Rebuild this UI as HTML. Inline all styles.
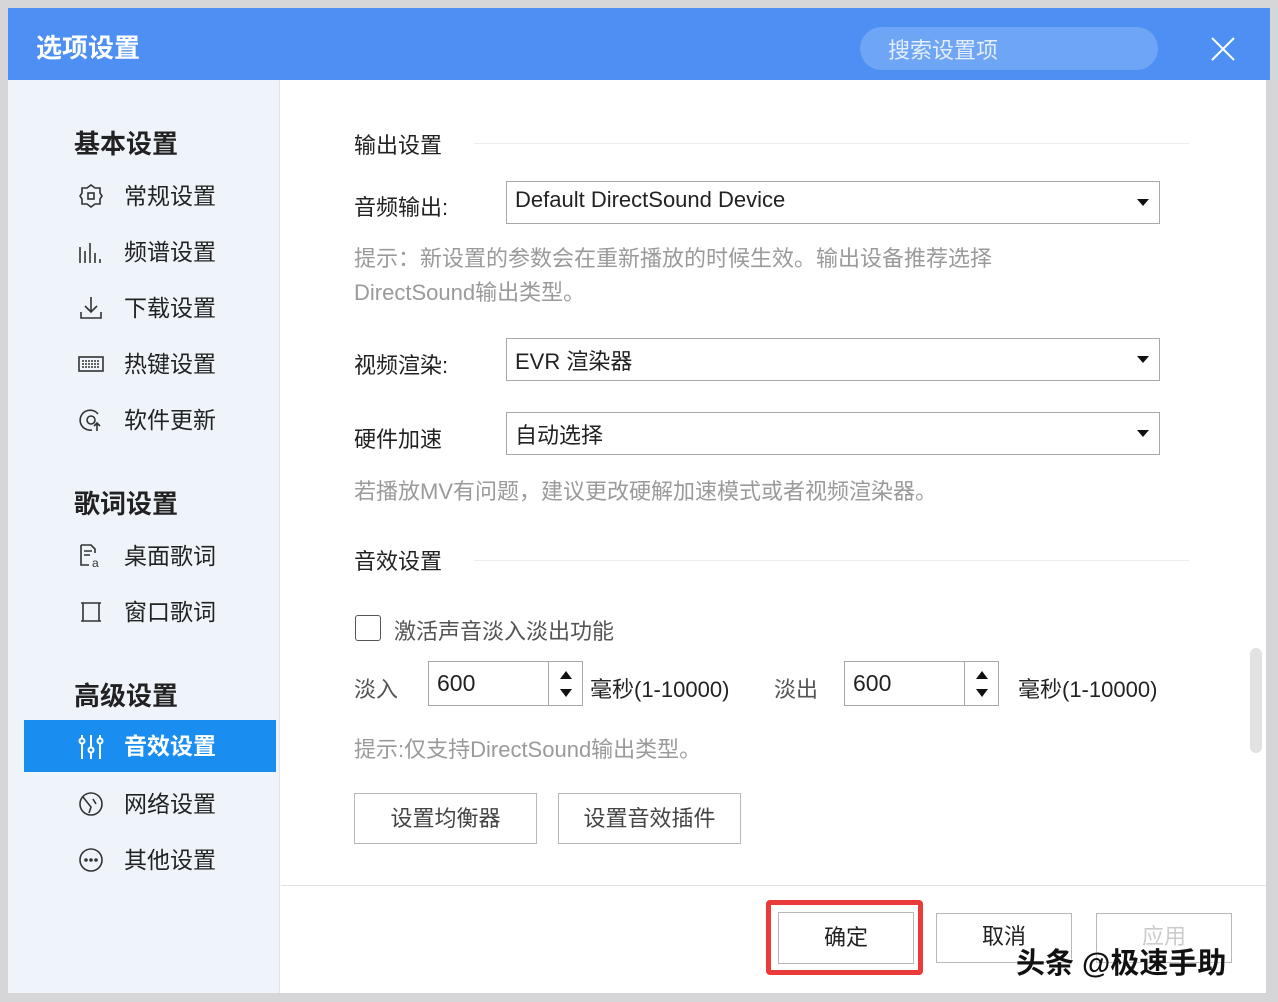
<!DOCTYPE html>
<html><head><meta charset="utf-8"><style>
*{margin:0;padding:0;box-sizing:border-box}
body{width:1278px;height:1002px;background:#d6d6d8;position:relative;overflow:hidden;font-family:"Liberation Sans","Noto Sans CJK SC",sans-serif;color:#222}
.win{position:absolute;left:8px;top:8px;width:1258px;height:985px;background:#fff}
.hdr{position:absolute;left:0;top:0;width:1262px;height:72px;background:#4d8ff2}
.title{position:absolute;left:28px;top:20px;font-size:26px;color:#fff;font-weight:bold}
.search{position:absolute;left:852px;top:19px;width:298px;height:43px;border-radius:22px;background:#6fa5f5;color:#e4eefc;font-size:22px;padding:6px 28px}
.side{position:absolute;left:0;top:72px;width:272px;height:913px;background:#eff4fb;border-right:1px solid #dde3ec}
.sh{position:absolute;left:66px;font-size:26px;font-weight:bold;color:#222}
.it{position:absolute;left:16px;width:252px;height:52px;font-size:23px;padding-left:100px;line-height:52px}
.it svg{position:absolute;left:54px;top:13px}
.sel{background:#1a8ef0;color:#fff;font-weight:bold}
.c{position:absolute;font-size:22px}
.gray{color:#9a9a9a}
.line{position:absolute;height:1px;background:#ececec}
.dd{position:absolute;left:498px;width:654px;height:43px;border:1px solid #a8a8a8;font-size:22px;padding:5px 8px}
.dd:after{content:"";position:absolute;right:10px;top:17px;border-left:6px solid transparent;border-right:6px solid transparent;border-top:7px solid #111}
.spin{position:absolute;width:155px;height:45px;border:1px solid #a8a8a8;font-size:23px;padding:8px 8px}
.spin i{position:absolute;right:0;top:0;width:34px;height:43px;border-left:1px solid #a8a8a8}
.spin i:before{content:"";position:absolute;left:11px;top:9px;border-left:6px solid transparent;border-right:6px solid transparent;border-bottom:8px solid #111}
.spin i:after{content:"";position:absolute;left:11px;top:27px;border-left:6px solid transparent;border-right:6px solid transparent;border-top:8px solid #111}
.btn{position:absolute;border:1px solid #b8b8b8;font-size:22px;text-align:center;background:#fff}
</style></head><body>
<div class="win">
<div class="hdr"><div class="title">选项设置</div><div class="search">搜索设置项</div>
<svg style="position:absolute;left:1203px;top:29px" width="24" height="24"><path d="M1 1L23 23M23 1L1 23" stroke="#fff" stroke-width="2"/></svg></div>
<div class="side">
<div class="sh" style="top:44px">基本设置</div>
<div class="it" style="top:90px"><svg width="26" height="26" fill="none" stroke="#333" stroke-width="1.6"><path d="M13 2l4 3 5 0 0 5 2 3-2 3 0 5-5 0-4 3-4-3-5 0 0-5-2-3 2-3 0-5 5 0z"/><rect x="10" y="10" width="6" height="6"/></svg>常规设置</div>
<div class="it" style="top:146px"><svg width="26" height="26" stroke="#333" stroke-width="1.6"><path d="M2 8v16M7 12v12M12 4v20M17 14v10M22 20v4"/></svg>频谱设置</div>
<div class="it" style="top:202px"><svg width="26" height="26" fill="none" stroke="#333" stroke-width="1.6"><path d="M13 2v15M7 11l6 6 6-6M3 17v6h20v-6"/></svg>下载设置</div>
<div class="it" style="top:258px"><svg width="26" height="26" fill="none" stroke="#333" stroke-width="1.6"><rect x="1" y="6" width="24" height="14"/><path d="M4 10h18M4 13h18M4 16h18" stroke-dasharray="2 1"/></svg>热键设置</div>
<div class="it" style="top:314px"><svg width="26" height="26" fill="none" stroke="#333" stroke-width="1.6"><path d="M20 7A10 10 0 1 0 14 23"/><circle cx="13" cy="13" r="4"/><path d="M19 24v-8M16 19l3-3 3 3"/></svg>软件更新</div>
<div class="sh" style="top:404px">歌词设置</div>
<div class="it" style="top:450px"><svg width="26" height="26" fill="none" stroke="#333" stroke-width="1.6"><path d="M3 2h10l4 4v4M3 2v20h8M6 8h8M6 12h6"/><text x="14" y="24" font-size="12" fill="#333" stroke="none">a</text></svg>桌面歌词</div>
<div class="it" style="top:506px"><svg width="26" height="26" fill="none" stroke="#333" stroke-width="1.6"><path d="M3 4h20M3 22h20M5 4v18M21 4v18"/></svg>窗口歌词</div>
<div class="sh" style="top:596px">高级设置</div>
<div class="it sel" style="top:640px"><svg width="26" height="28" fill="none" stroke="#fff" stroke-width="2"><path d="M4 2v24M13 2v24M22 2v24"/><circle cx="4" cy="8" r="2.5" fill="#1a8ef0"/><circle cx="13" cy="17" r="2.5" fill="#1a8ef0"/><circle cx="22" cy="8" r="2.5" fill="#1a8ef0"/></svg>音效设置</div>
<div class="it" style="top:698px"><svg width="26" height="26" fill="none" stroke="#333" stroke-width="1.6"><circle cx="13" cy="13" r="11"/><path d="M5 6l8 10-2 6M15 8l3 5"/></svg>网络设置</div>
<div class="it" style="top:754px"><svg width="26" height="26" fill="none" stroke="#333" stroke-width="1.6"><circle cx="13" cy="13" r="11"/><circle cx="8" cy="13" r="1" fill="#333"/><circle cx="13" cy="13" r="1" fill="#333"/><circle cx="18" cy="13" r="1" fill="#333"/></svg>其他设置</div>
</div>
<div class="c" style="left:346px;top:120px">输出设置</div><div class="line" style="left:466px;top:135px;width:715px"></div>
<div class="c" style="left:346px;top:182px">音频输出:</div>
<div class="dd" style="top:173px">Default DirectSound Device</div>
<div class="c gray" style="left:346px;top:234px;line-height:34px">提示：新设置的参数会在重新播放的时候生效。输出设备推荐选择<br>DirectSound输出类型。</div>
<div class="c" style="left:346px;top:340px">视频渲染:</div>
<div class="dd" style="top:330px">EVR 渲染器</div>
<div class="c" style="left:346px;top:414px">硬件加速</div>
<div class="dd" style="top:404px">自动选择</div>
<div class="c gray" style="left:346px;top:466px">若播放MV有问题，建议更改硬解加速模式或者视频渲染器。</div>
<div class="c" style="left:346px;top:536px">音效设置</div><div class="line" style="left:466px;top:552px;width:715px"></div>
<div style="position:absolute;left:347px;top:607px;width:26px;height:26px;border:1.5px solid #555;border-radius:3px"></div>
<div class="c gray" style="left:386px;top:606px;color:#555">激活声音淡入淡出功能</div>
<div class="c gray" style="left:346px;top:664px;color:#555">淡入</div>
<div class="spin" style="left:420px;top:653px">600<i></i></div>
<div class="c" style="left:582px;top:664px">毫秒(1-10000)</div>
<div class="c gray" style="left:766px;top:664px;color:#555">淡出</div>
<div class="spin" style="left:836px;top:653px">600<i></i></div>
<div class="c" style="left:1010px;top:664px">毫秒(1-10000)</div>
<div class="c gray" style="left:346px;top:724px">提示:仅支持DirectSound输出类型。</div>
<div class="btn" style="left:346px;top:785px;width:183px;height:51px;line-height:49px;color:#444">设置均衡器</div>
<div class="btn" style="left:550px;top:785px;width:183px;height:51px;line-height:49px;color:#444">设置音效插件</div>
<div style="position:absolute;left:1242px;top:640px;width:12px;height:105px;border-radius:6px;background:#e2e2e2"></div>
<div class="line" style="left:273px;top:877px;width:985px;background:#e2e2e2"></div>
<div class="btn" style="left:770px;top:904px;width:136px;height:52px;line-height:50px">确定</div>
<div style="position:absolute;left:758px;top:892px;width:157px;height:75px;border:5px solid #ea3a3a;border-radius:4px"></div>
<div class="btn" style="left:928px;top:905px;width:136px;height:50px;line-height:46px">取消</div>
<div class="btn" style="left:1088px;top:905px;width:136px;height:50px;line-height:46px;color:#ccc">应用</div>
<div style="position:absolute;left:1008px;top:932px;font-size:29px;font-weight:bold;color:#111;text-shadow:0 0 3px #fff">头条 @极速手助</div>
</div>
</body></html>
